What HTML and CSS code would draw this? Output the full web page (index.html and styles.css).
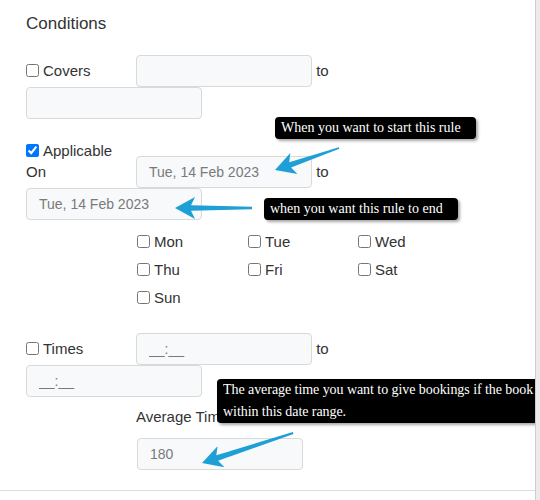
FILE: index.html
```html
<!DOCTYPE html>
<html>
<head>
<meta charset="utf-8">
<link rel="stylesheet" href="styles.css">
</head>
<body>
<div class="page">
  <h3 class="title">Conditions</h3>

  <div class="row">
    <label class="lab"><input type="checkbox" class="cb">Covers</label><input class="field" type="text"> to<input class="field block" type="text">
  </div>

  <div class="row">
    <label class="lab"><input type="checkbox" class="cb" checked>Applicable On</label><input class="field" type="text" placeholder="Tue, 14 Feb 2023"> to<input class="field block" type="text" placeholder="Tue, 14 Feb 2023">
  </div>

  <div class="days">
    <label class="day"><input type="checkbox" class="cb">Mon</label>
    <label class="day"><input type="checkbox" class="cb">Tue</label>
    <label class="day"><input type="checkbox" class="cb">Wed</label>
    <label class="day"><input type="checkbox" class="cb">Thu</label>
    <label class="day"><input type="checkbox" class="cb">Fri</label>
    <label class="day"><input type="checkbox" class="cb">Sat</label>
    <label class="day"><input type="checkbox" class="cb">Sun</label>
  </div>

  <div class="row row-times">
    <label class="lab"><input type="checkbox" class="cb">Times</label><input class="field" type="text" placeholder="__:__"> to<input class="field block" type="text" placeholder="__:__">
  </div>

  <div class="avg-label">Average Time</div>
  <input class="field avg-field" type="text" placeholder="180">

  <div class="rule"></div>

  <div class="tip tip-start">When you want to start this rule</div>
  <div class="tip tip-end">when you want this rule to end</div>
  <div class="tip tip-avg">The average time you want to give bookings if the book<br>within this date range.</div>

  <svg class="arrows" width="536" height="500" viewBox="0 0 536 500">
    <g fill="#1e9fd6">
      <polygon transform="translate(275 170) rotate(-18.97)" points="0,0 20,-11 16,-2.8 67.7,-0.8 67.7,0.8 16,2.8 20,11"/>
      <polygon transform="translate(175 208)" points="0,0 20,-11 16,-2.8 77,-1.2 77,1.2 16,2.8 20,11"/>
      <polygon transform="translate(202 463) rotate(-18.25)" points="0,0 20,-11 16,-2.8 96,-1 96,1 16,2.8 20,11"/>
    </g>
  </svg>
</div>
</body>
</html>
```

FILE: styles.css
```css
html, body {
  margin: 0;
  padding: 0;
}

body {
  background: #ebebeb;
  font-family: "Liberation Sans", Arial, sans-serif;
  font-size: 15px;
  color: #333;
  height: 500px;
  overflow: hidden;
}

.page {
  position: relative;
  width: 536px;
  height: 500px;
  background: #fff;
  border-right: 1px solid #cdcdcd;
  overflow: hidden;
  box-sizing: border-box;
  padding-left: 26px;
}

.title {
  margin: 14px 0 0;
  font-size: 17px;
  line-height: 20px;
  font-weight: normal;
  color: #333;
}

.row {
  margin-top: 21px;
  line-height: 21px;
}

.row-times {
  margin-top: 22px;
}

.lab {
  display: inline-block;
  width: 110px;
  vertical-align: baseline;
}

.cb {
  width: 13px;
  height: 13px;
  margin: 0 4px 0 0;
  vertical-align: -1px;
}

.field {
  display: inline-block;
  box-sizing: border-box;
  width: 176px;
  height: 32px;
  margin: 0;
  padding: 0 12px;
  border: 1px solid #d9d9d9;
  border-radius: 4px;
  background: #f8f9fa;
  font-family: "Liberation Sans", Arial, sans-serif;
  font-size: 14px;
  color: #777;
  vertical-align: baseline;
  outline: none;
}

.field::placeholder {
  color: #7a7a7a;
  opacity: 1;
}

.field.block {
  display: block;
}

.days {
  display: grid;
  grid-template-columns: 111px 110px 110px;
  margin: 7px 0 0 111px;
}

.day {
  display: flex;
  align-items: center;
  height: 28px;
}

.day .cb {
  vertical-align: middle;
}

.avg-label {
  margin: 9px 0 0 110px;
  line-height: 21px;
}

.avg-field {
  display: block;
  width: 166px;
  margin: 11px 0 0 111px;
}

.rule {
  margin: 20px 0 0 -26px;
  border-top: 1px solid #dedede;
}

.tip {
  position: absolute;
  background: #000;
  color: #fff;
  font-family: "Liberation Serif", "Times New Roman", serif;
  font-size: 14px;
  line-height: 22px;
  padding: 0 15px 0 6px;
  border-radius: 4px;
  box-shadow: 2px 2px 3px rgba(0, 0, 0, 0.35);
  white-space: nowrap;
}

.tip-start {
  left: 275px;
  top: 117px;
}

.tip-end {
  left: 264px;
  top: 198px;
}

.tip-avg {
  left: 217px;
  top: 379px;
  letter-spacing: -0.06px;
}

.arrows {
  position: absolute;
  left: 0;
  top: 0;
  pointer-events: none;
}
```
